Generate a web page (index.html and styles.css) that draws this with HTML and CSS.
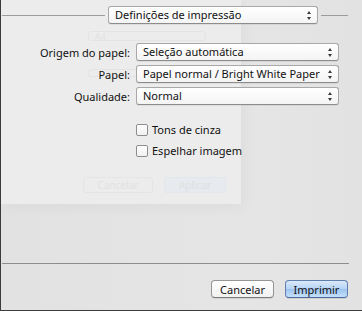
FILE: index.html
```html
<!DOCTYPE html>
<html lang="pt">
<head>
<meta charset="UTF-8">
<title>Imprimir</title>
<link rel="stylesheet" href="styles.css">
</head>
<body>
<div class="window">
  <!-- sheet fading out behind the print options -->
  <div class="ghost-sheet">
    <div class="ghost-popup ghost-a4">A4</div>
    <div class="ghost-popup ghost-second"></div>
    <div class="ghost-buttons">
      <span class="ghost-btn">Cancelar</span>
      <span class="ghost-btn ghost-apply">Aplicar</span>
    </div>
  </div>

  <div class="content">
    <div class="header">
      <div class="rule"></div>
      <div class="popup popup-title">
        <span>Definições de impressão</span>
        <span class="stepper"></span>
      </div>
      <div class="rule rule-right"></div>
    </div>

    <div class="form">
      <label class="field-label">Origem do papel:</label>
      <div class="popup"><span>Seleção automática</span><span class="stepper"></span></div>
      <label class="field-label">Papel:</label>
      <div class="popup"><span>Papel normal / Bright White Paper</span><span class="stepper"></span></div>
      <label class="field-label">Qualidade:</label>
      <div class="popup"><span>Normal</span><span class="stepper"></span></div>
    </div>

    <div class="options">
      <div class="check-row"><span class="checkbox"></span>Tons de cinza</div>
      <div class="check-row"><span class="checkbox"></span>Espelhar imagem</div>
    </div>

    <div class="footer">
      <div class="footer-rule"></div>
      <div class="actions">
        <button class="btn">Cancelar</button>
        <button class="btn btn-default">Imprimir</button>
      </div>
    </div>
  </div>
</div>
</body>
</html>
```

FILE: styles.css
```css
html, body {
  margin: 0;
  padding: 0;
}
body {
  width: 362px;
  height: 311px;
  overflow: hidden;
  font-family: "Lucida Grande", "Noto Sans", "DejaVu Sans", sans-serif;
  font-size: 11px;
  color: #111;
}
.window {
  position: relative;
  width: 362px;
  height: 311px;
  box-sizing: border-box;
  border-left: 1px solid #3c3c3c;
  border-bottom: 1px solid #3c3c3c;
  background: linear-gradient(to right, #e2e2e2, #e5e5e5 70%, #e2e2e2);
  overflow: hidden;
}

/* ghost sheet */
.ghost-sheet {
  position: absolute;
  left: 0;
  top: 0;
  width: 240px;
  height: 204px;
  background: #ececec;
  box-shadow: 3px 3px 14px rgba(0, 0, 0, 0.04);
}
.ghost-popup {
  position: absolute;
  left: 87px;
  width: 118px;
  height: 10px;
  border: 1px solid #e4e4e4;
  border-radius: 3px;
  color: #e2e2e2;
  font-size: 9px;
  line-height: 10px;
  padding-left: 6px;
  box-sizing: border-box;
}
.ghost-a4 {
  top: 31px;
}
.ghost-second {
  top: 69px;
  height: 8px;
}
.ghost-buttons {
  position: absolute;
  left: 82px;
  top: 177px;
  display: flex;
  gap: 11px;
}
.ghost-btn {
  width: 70px;
  height: 16px;
  box-sizing: border-box;
  border: 1px solid #e5e5e5;
  border-radius: 3px;
  color: #e1e1e1;
  text-align: center;
  line-height: 14px;
  font-size: 10px;
}
.ghost-apply {
  width: 62px;
  background: #e7eaef;
  border-color: #e3e6eb;
}

/* main content */
.content {
  position: relative;
  height: 310px;
  display: flex;
  flex-direction: column;
}
.header {
  display: flex;
  align-items: center;
  padding: 6px 14px 0 1px;
  gap: 3px;
}
.rule {
  flex: 1;
  height: 1px;
  background: #9c9c9c;
}
.rule-right {
  flex: 0 0 27px;
}
.popup {
  position: relative;
  height: 18px;
  box-sizing: border-box;
  border: 1px solid #a8a8a8;
  border-bottom-color: #8c8c8c;
  border-radius: 3px;
  background: linear-gradient(#ffffff, #f4f4f4);
  box-shadow: 0 1px 0 rgba(0, 0, 0, 0.06);
  padding: 0 18px 0 6px;
  line-height: 16px;
  white-space: nowrap;
}
.popup-title {
  width: 210px;
}
.stepper {
  position: absolute;
  right: 5px;
  top: 4px;
  width: 5px;
  height: 9px;
}
.stepper::before,
.stepper::after {
  content: "";
  position: absolute;
  left: 0;
  border-left: 2.5px solid transparent;
  border-right: 2.5px solid transparent;
}
.stepper::before {
  top: 0;
  border-bottom: 3px solid #3a3a3a;
}
.stepper::after {
  bottom: 0;
  border-top: 3px solid #3a3a3a;
}

.form {
  display: grid;
  grid-template-columns: 129px 203px;
  column-gap: 6px;
  row-gap: 4px;
  align-items: center;
  margin-top: 19px;
}
.field-label {
  text-align: right;
}
.options {
  margin: 18px 0 0 135px;
  display: flex;
  flex-direction: column;
  gap: 8px;
}
.check-row {
  display: flex;
  align-items: center;
  gap: 4px;
  height: 13px;
}
.checkbox {
  width: 12px;
  height: 12px;
  box-sizing: border-box;
  border: 1px solid #8e8e8e;
  border-radius: 2px;
  background: linear-gradient(#ffffff, #f0f0f0);
}

.footer {
  margin-top: auto;
  padding-bottom: 12px;
}
.footer-rule {
  height: 1px;
  margin: 0 13px 0 1px;
  background: #8e8e8e;
}
.actions {
  display: flex;
  justify-content: flex-end;
  gap: 11px;
  padding: 16px 14px 0 0;
}
.btn {
  font: inherit;
  color: #111;
  width: 63px;
  height: 18px;
  padding: 0;
  box-sizing: border-box;
  border: 1px solid #959595;
  border-bottom-color: #7a7a7a;
  border-radius: 4px;
  background: linear-gradient(#ffffff, #f1f1f1);
  box-shadow: 0 1px 0 rgba(0, 0, 0, 0.08);
}
.btn-default {
  border-color: #5f7fb0;
  border-bottom-color: #4a6a9c;
  background: linear-gradient(#dbeafa, #b5d3f4 50%, #9cc4ef 51%, #c6e0fb);
}
```
